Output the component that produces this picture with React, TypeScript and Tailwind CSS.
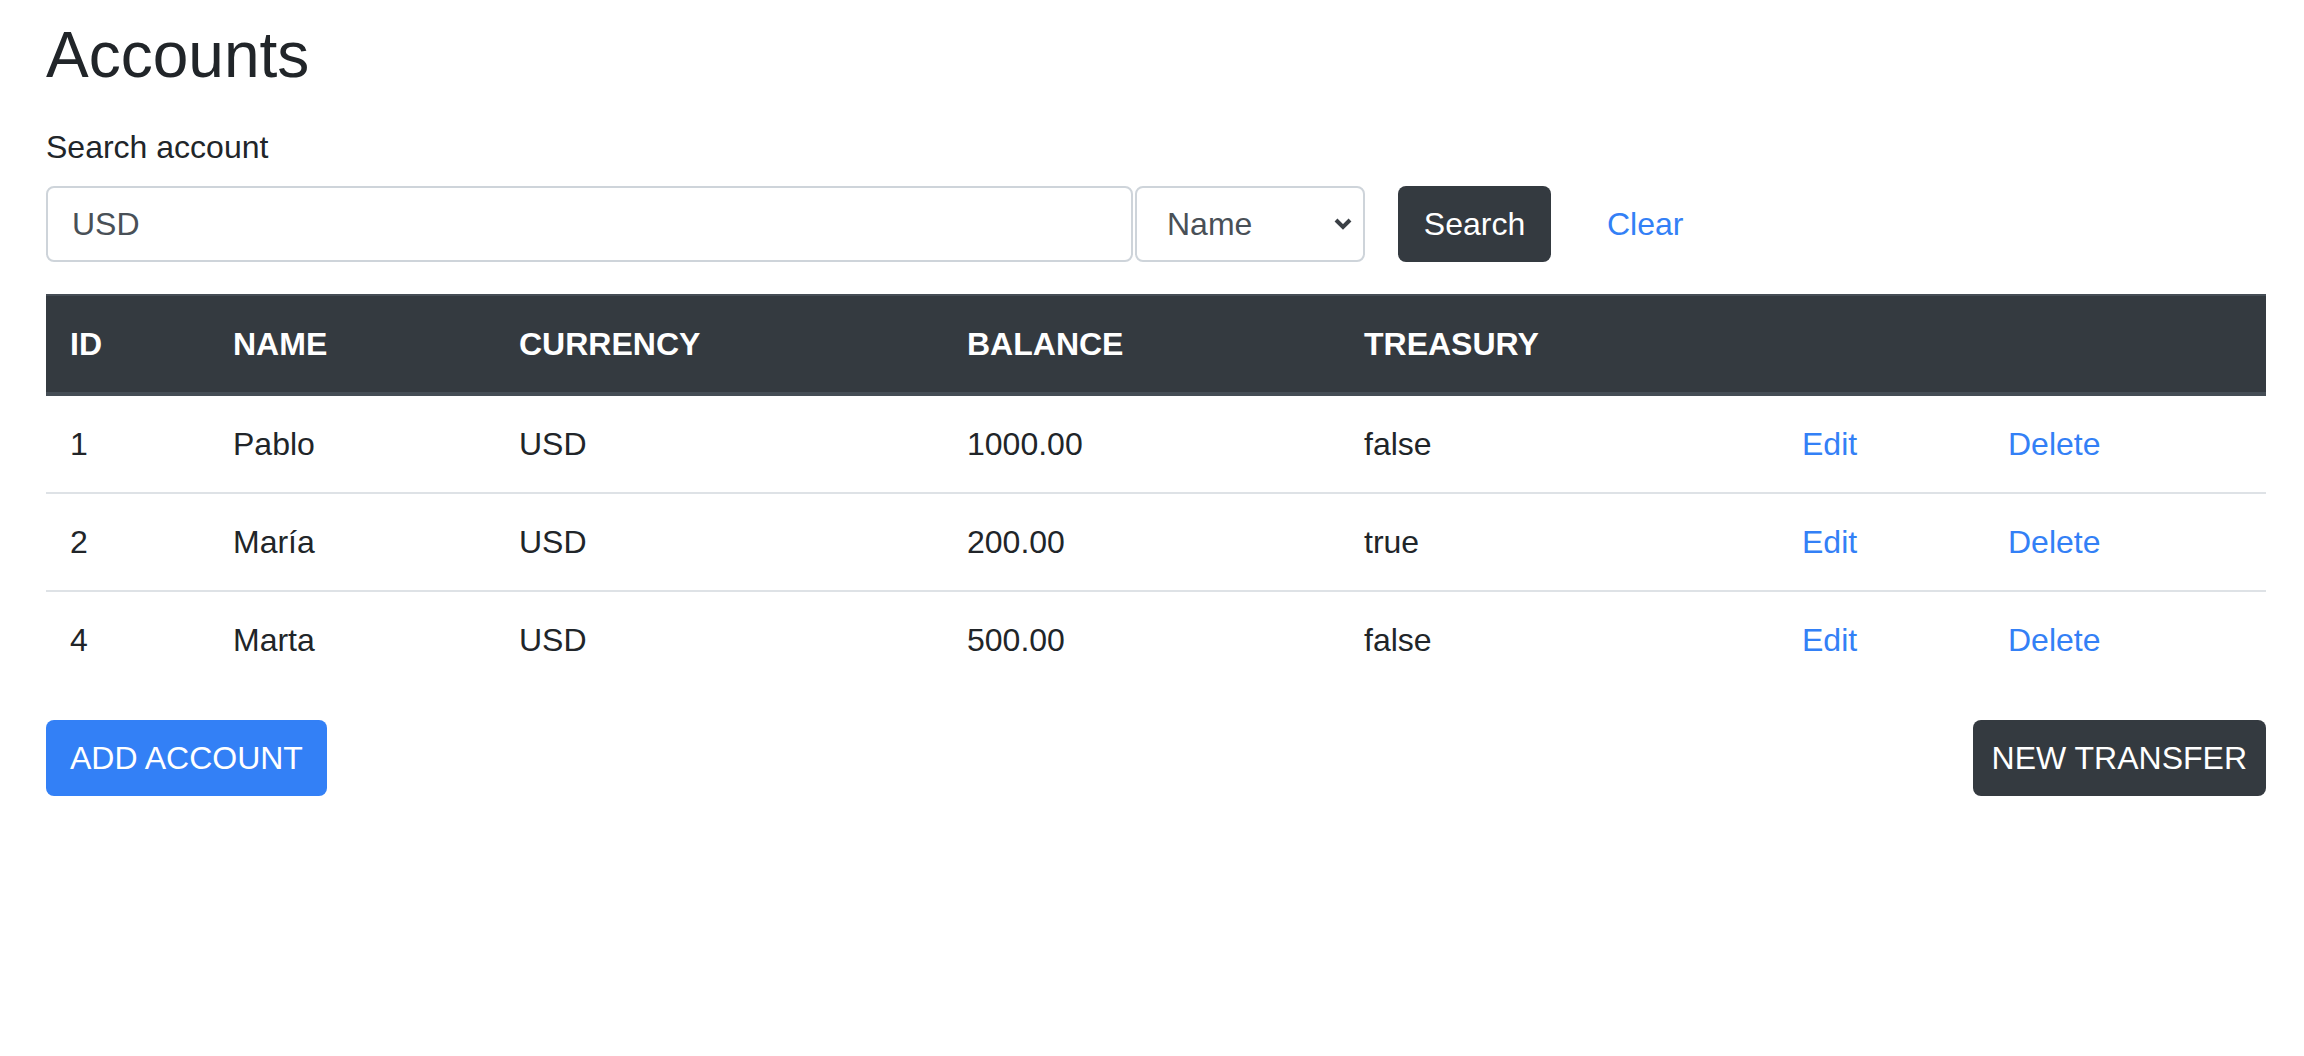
import React from "react"

const accounts = [
  { id: 1, name: "Pablo", currency: "USD", balance: "1000.00", treasury: "false" },
  { id: 2, name: "María", currency: "USD", balance: "200.00", treasury: "true" },
  { id: 4, name: "Marta", currency: "USD", balance: "500.00", treasury: "false" },
]

export default function App() {
  return (
    <div
      className="min-h-screen bg-white pl-[46px] pr-[38px] pt-[17px] text-[32px] leading-[48px] text-[#212529]"
      style={{ fontFamily: '"Liberation Sans", Arial, sans-serif' }}
    >
      <h2 className="text-[64px] leading-[76.8px] font-medium">Accounts</h2>

      <label className="mt-[29px] mb-[15px] block">Search account</label>

      <div className="flex items-center">
        <div className="flex h-[76px] w-[1087px] items-center rounded-[8px] border-2 border-[#ced4da] px-[24px] text-[#495057]">
          USD
        </div>
        <div className="ml-[2px] flex h-[76px] w-[230px] items-center justify-between rounded-[8px] border-2 border-[#ced4da] pl-[30px] pr-[8px] text-[#495057]">
          <span>Name</span>
          <svg width="20" height="14" viewBox="0 0 20 14" className="mr-[2px]">
            <polyline points="3,3 10,10 17,3" fill="none" stroke="#3b4046" strokeWidth="4" />
          </svg>
        </div>
        <button className="ml-[33px] h-[76px] w-[153px] rounded-[8px] bg-[#343a40] text-white">
          Search
        </button>
        <button className="ml-[32px] px-[24px] text-[#3380f6]">Clear</button>
      </div>

      <table className="mt-[32px] w-full table-fixed border-collapse">
        <thead>
          <tr className="bg-[#343a40] text-white">
            <th className="w-[163px] border-t-2 border-b-4 border-[#454d55] px-[24px] py-[24px] text-left font-bold">ID</th>
            <th className="w-[286px] border-t-2 border-b-4 border-[#454d55] px-[24px] py-[24px] text-left font-bold">NAME</th>
            <th className="w-[448px] border-t-2 border-b-4 border-[#454d55] px-[24px] py-[24px] text-left font-bold">CURRENCY</th>
            <th className="w-[397px] border-t-2 border-b-4 border-[#454d55] px-[24px] py-[24px] text-left font-bold">BALANCE</th>
            <th className="w-[438px] border-t-2 border-b-4 border-[#454d55] px-[24px] py-[24px] text-left font-bold">TREASURY</th>
            <th className="w-[206px] border-t-2 border-b-4 border-[#454d55] px-[24px] py-[24px]"></th>
            <th className="border-t-2 border-b-4 border-[#454d55] px-[24px] py-[24px]"></th>
          </tr>
        </thead>
        <tbody>
          {accounts.map((a, i) => (
            <tr key={a.id} className={i > 0 ? "border-t-2 border-[#dee2e6]" : ""}>
              <td className="px-[24px] py-[24px]">{a.id}</td>
              <td className="px-[24px] py-[24px]">{a.name}</td>
              <td className="px-[24px] py-[24px]">{a.currency}</td>
              <td className="px-[24px] py-[24px]">{a.balance}</td>
              <td className="px-[24px] py-[24px]">{a.treasury}</td>
              <td className="px-[24px] py-[24px] text-[#3380f6]">Edit</td>
              <td className="px-[24px] py-[24px] text-[#3380f6]">Delete</td>
            </tr>
          ))}
        </tbody>
      </table>

      <div className="mt-[32px] flex justify-between">
        <button className="h-[76px] rounded-[8px] bg-[#3380f6] px-[24px] text-white">ADD ACCOUNT</button>
        <button className="h-[76px] rounded-[8px] bg-[#343a40] px-[19px] text-white">NEW TRANSFER</button>
      </div>
    </div>
  )
}
